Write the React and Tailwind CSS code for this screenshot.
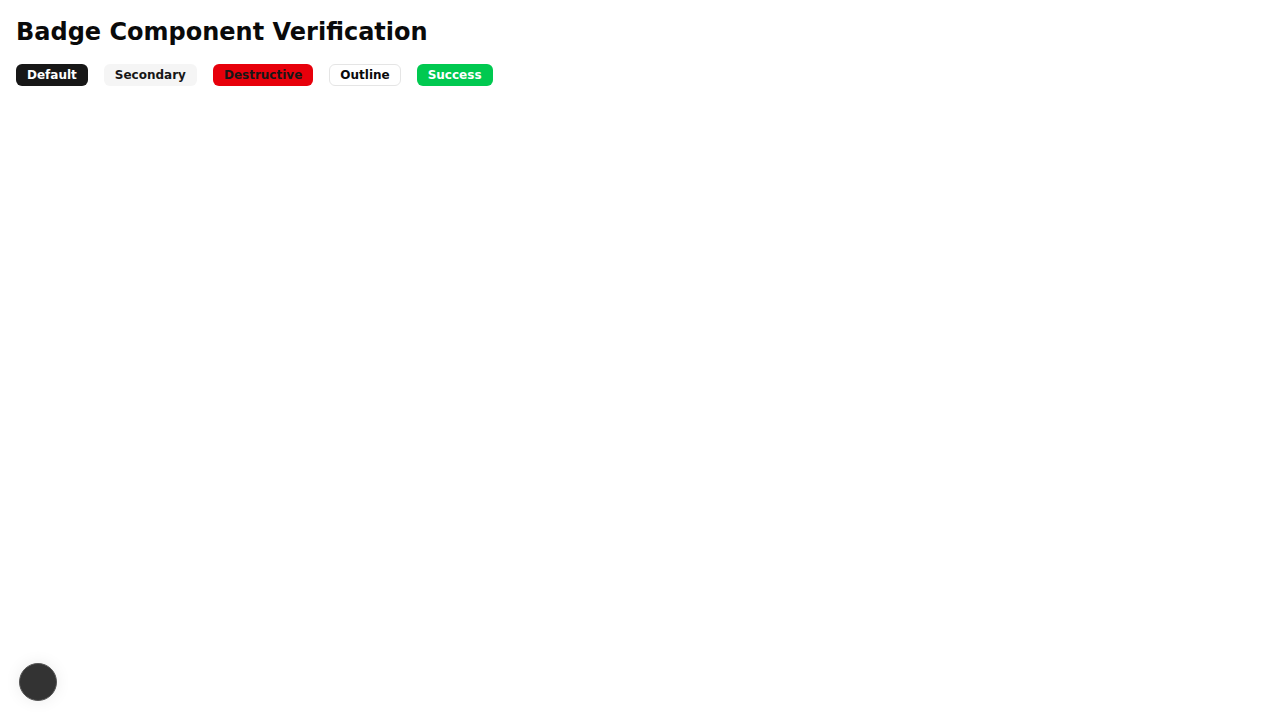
import React from 'react'

const variants = {
  default: 'bg-[#171717] text-white border-transparent',
  secondary: 'bg-[#f5f5f5] text-[#171717] border-transparent',
  destructive: 'bg-[#e7000b] text-[#171717] border-transparent',
  outline: 'bg-white text-[#0a0a0a] border-[#e5e5e5]',
  success: 'bg-[#00c950] text-white border-transparent',
}

function Badge({ variant = 'default', children }) {
  return (
    <span className={`inline-flex items-center rounded-md border px-2.5 py-0.5 text-xs leading-4 font-bold ${variants[variant]}`}>
      {children}
    </span>
  )
}

export default function App() {
  return (
    <div className="min-h-screen bg-white p-4 text-[#0a0a0a] font-['DejaVu_Sans',sans-serif]">
      <h1 className="text-2xl leading-8 font-bold mb-4">Badge Component Verification</h1>
      <div className="flex items-center gap-4">
        <Badge>Default</Badge>
        <Badge variant="secondary">Secondary</Badge>
        <Badge variant="destructive">Destructive</Badge>
        <Badge variant="outline">Outline</Badge>
        <Badge variant="success">Success</Badge>
      </div>
      <div className="fixed left-[19px] bottom-[19px] w-[38px] h-[38px] rounded-full bg-[#333333] border border-[#555555] shadow-[0_0_16px_rgba(0,0,0,0.08)]" />
    </div>
  )
}
